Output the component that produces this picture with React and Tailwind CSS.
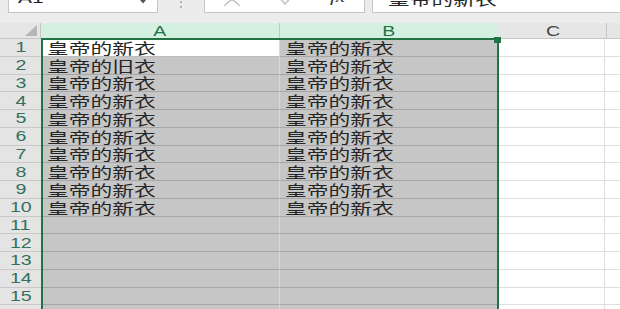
import React from "react";

const A = ["皇帝的新衣", "皇帝的旧衣", "皇帝的新衣", "皇帝的新衣", "皇帝的新衣", "皇帝的新衣", "皇帝的新衣", "皇帝的新衣", "皇帝的新衣", "皇帝的新衣"];
const B = Array(10).fill("皇帝的新衣");

function Cjk({ children }) {
  return (
    <span className="inline-block origin-left scale-x-[1.45] whitespace-nowrap font-['Noto_Sans_CJK_SC',sans-serif] text-[15px] leading-none text-[#262626]">
      {children}
    </span>
  );
}

function Row({ n }) {
  const a = A[n - 1] || "";
  const b = B[n - 1] || "";
  return (
    <div className="flex h-[17.75px] shrink-0">
      <div className="flex w-[41px] shrink-0 items-center justify-center border-b border-[#c9c9c9] bg-[#e4e4e4]">
        <span className="inline-block scale-x-[1.4] font-['Liberation_Sans',sans-serif] text-[14px] leading-none text-[#35705a]">{n}</span>
      </div>
      <div className={`flex w-[239px] shrink-0 items-center border-b border-r border-r-[#d9d9d9] pl-[6px] ${n === 1 ? "bg-white border-b-[#bcbcbc]" : "bg-[#c6c6c6] border-b-[#a6a6a6]"}`}>
        {a && <Cjk>{a}</Cjk>}
      </div>
      <div className="flex w-[217px] shrink-0 items-center border-b border-[#a6a6a6] bg-[#c6c6c6] pl-[5px]">
        {b && <Cjk>{b}</Cjk>}
      </div>
      <div className="w-[2px] shrink-0" />
      <div className="w-[106px] shrink-0 border-b border-r border-[#dedede] bg-white" />
      <div className="flex-1 border-b border-[#dedede] bg-white" />
    </div>
  );
}

export default function App() {
  const rows = Array.from({ length: 16 }, (_, i) => i + 1);
  return (
    <div className="relative flex h-[309px] w-[620px] flex-col overflow-hidden bg-[#ececec]">
      {/* formula bar */}
      <div className="flex h-[23px] shrink-0 items-start bg-[#ececec]">
        <div className="relative ml-[8px] h-[13px] w-[150px] shrink-0 overflow-hidden border-x border-b border-[#c6c6c6] bg-white">
          <div className="absolute left-[9px] top-[-10px] flex leading-none">
            <span className="inline-block origin-left scale-x-[1.4] font-['Liberation_Sans',sans-serif] text-[15px] leading-none text-[#222]">A1</span>
          </div>
          <svg className="absolute right-[10px] top-[0px]" width="8" height="5" viewBox="0 0 8 5">
            <path d="M1 0 L4 3.5 L7 0 Z" fill="#555" />
          </svg>
        </div>
        <div className="flex h-[13px] w-[46px] shrink-0 justify-center">
          <svg width="4" height="13" viewBox="0 0 4 13">
            <circle cx="2" cy="2" r="1" fill="#a0a0a0" />
            <circle cx="2" cy="7" r="1" fill="#a0a0a0" />
          </svg>
        </div>
        <div className="relative h-[13px] w-[161px] shrink-0 overflow-hidden border-x border-b border-[#c6c6c6] bg-white">
          <svg className="absolute left-[17px] top-[-9px]" width="20" height="16" viewBox="0 0 20 16">
            <path d="M2 1 L18 15 M18 1 L2 15" stroke="#c4c4c4" strokeWidth="1.6" fill="none" />
          </svg>
          <svg className="absolute left-[72px] top-[-9px]" width="20" height="16" viewBox="0 0 20 16">
            <path d="M2 6 L8 13 L18 2" stroke="#c4c4c4" strokeWidth="1.6" fill="none" />
          </svg>
          <div className="absolute left-[125px] top-[-10px] flex leading-none">
            <span className="inline-block origin-left scale-x-[1.4] font-['Liberation_Serif',serif] text-[15px] italic leading-none text-[#333]">fx</span>
          </div>
        </div>
        <div className="w-[7px] shrink-0" />
        <div className="relative h-[13px] flex-1 overflow-hidden border-l border-b border-[#c6c6c6] bg-white">
          <div className="absolute left-[15px] top-[-9px] flex leading-none">
            <Cjk>皇帝的新衣</Cjk>
          </div>
        </div>
      </div>

      {/* column headers */}
      <div className="flex h-[16px] shrink-0">
        <div className="relative w-[41px] shrink-0 border-r border-b border-[#c6c6c6] bg-[#e6e6e6]">
          <svg className="absolute bottom-[2px] right-[3px]" width="12" height="11" viewBox="0 0 12 11">
            <path d="M12 0 L12 11 L0 11 Z" fill="#b7b7b7" />
          </svg>
        </div>
        <div className="flex w-[239px] shrink-0 items-center justify-center border-r border-[#c6c6c6] bg-[#d3f0e0]">
          <span className="inline-block scale-x-[1.4] font-['Liberation_Sans',sans-serif] text-[14px] leading-none text-[#217346]">A</span>
        </div>
        <div className="flex w-[217px] shrink-0 items-center justify-center bg-[#d3f0e0]">
          <span className="inline-block scale-x-[1.4] font-['Liberation_Sans',sans-serif] text-[14px] leading-none text-[#217346]">B</span>
        </div>
        <div className="flex w-[110px] shrink-0 items-center justify-center border-r border-b border-[#c6c6c6] bg-[#e6e6e6] pl-[4px]">
          <span className="inline-block scale-x-[1.4] font-['Liberation_Sans',sans-serif] text-[14px] leading-none text-[#444]">C</span>
        </div>
        <div className="flex-1 border-b border-[#c6c6c6] bg-[#e6e6e6]" />
      </div>

      {/* rows */}
      <div className="flex flex-col">
        {rows.map((n) => (
          <Row key={n} n={n} />
        ))}
      </div>

      {/* selection border */}
      <div className="pointer-events-none absolute left-[41px] top-[38px] h-[300px] w-[458px] border-2 border-b-0 border-[#217346]">
        <div className="absolute -right-[4px] -top-[3px] h-[6px] w-[7px] bg-[#217346]" />
      </div>
    </div>
  );
}
